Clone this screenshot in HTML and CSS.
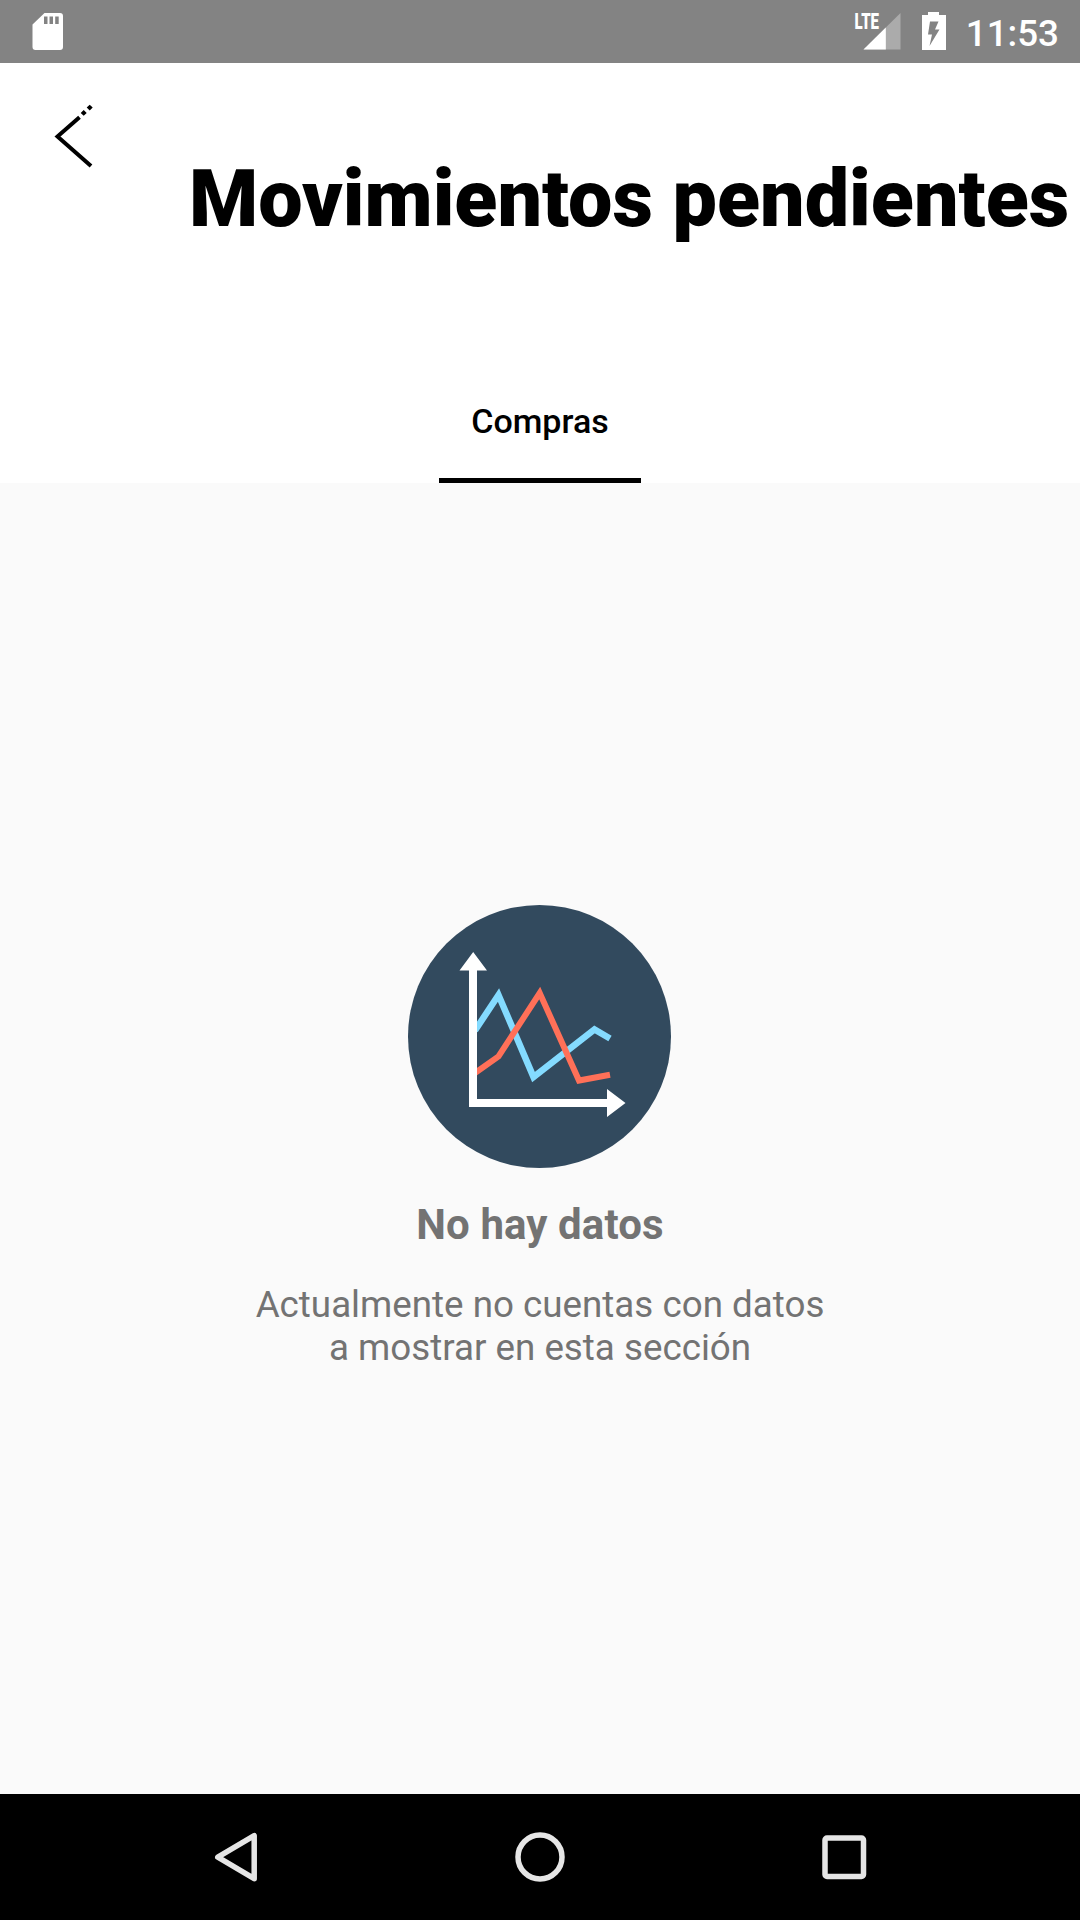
FILE: index.html
```html
<!DOCTYPE html>
<html lang="es">
<head>
    <meta charset="UTF-8">
    <meta name="viewport" content="width=device-width, initial-scale=1.0">
    <title>Movimientos pendientes</title>
    <link rel="stylesheet" href="styles.css">
</head>
<body>
    <div class="status-bar">
        <svg class="sd-icon" width="32" height="40" viewBox="0 0 32 40">
            <path fill="#fff" fill-rule="evenodd" d="M12.5 1H28a3 3 0 0 1 3 3v31a3 3 0 0 1-3 3H3.500a3 3 0 0 1-3-3V12.500zM12 4.500v7.500h3.500V4.500zM17.500 4.500v7.500h3.500V4.500zM23.200 4.500v7.500h3.500V4.500z"/>
        </svg>
        <div class="status-right">
            <svg class="signal-icon" width="50" height="40" viewBox="0 0 50 40">
                <path fill="#ababab" d="M47.500 1v36.500H10.500z"/>
                <path fill="#fff" d="M32.800 15.500v22H10.500z"/>
                <text class="lte" x="1.500" y="17.300" textLength="24.500" lengthAdjust="spacingAndGlyphs">LTE</text>
            </svg>
            <svg class="battery-icon" width="26" height="40" viewBox="0 0 26 40">
                <path fill="#fff" d="M7 0h11v3h7v35H1V3h6z"/>
                <path fill="#838383" d="M9 9.500h8.500l-3.500 8h4.500L8.500 34l2.500-11.500H7z"/>
            </svg>
            <span class="time">11:53</span>
        </div>
    </div>

    <div class="header">
        <div class="title-row">
            <svg class="back-icon" width="40" height="66" viewBox="0 0 40 66">
                <path fill="none" stroke="#000" stroke-width="4" d="M26.500 14.200 4.500 33.500 38 63"/>
                <path d="M30.700 7l3 2.900-3 2.900-3-2.900zM36.700 1.700l3 2.900-3 2.900-3-2.900z"/>
            </svg>
            <h1>Movimientos pendientes</h1>
        </div>
        <div class="tabs">
            <div class="tab active">Compras</div>
        </div>
    </div>

    <div class="content">
        <svg class="chart-icon" width="264" height="264" viewBox="0 0 264 264">
            <circle cx="131.500" cy="131.500" r="131.500" fill="#324a5e"/>
            <path fill="none" stroke="#84dbff" stroke-width="6.500" d="M67 125.500 90.500 90 125.500 172 186.500 124.500 202 133.500"/>
            <path fill="none" stroke="#ff7058" stroke-width="6" d="M67 168 90.500 151.500 131.700 88 171 175.500 202 169.700"/>
            <path fill="#fff" d="M61 65.500H51.500L65.200 47 79 65.500H69V194h130v-10l18.500 14L199 212v-10H61z"/>
        </svg>
        <h2>No hay datos</h2>
        <p>Actualmente no cuentas con datos<br>a mostrar en esta sección</p>
    </div>

    <div class="nav-bar">
        <svg width="50" height="50" viewBox="0 0 50 50">
            <path class="nav-shape" d="M44.200 3.700v43L7.800 25.200z"/>
        </svg>
        <svg width="50" height="50" viewBox="0 0 50 50">
            <circle class="nav-shape" cx="25" cy="25" r="22"/>
        </svg>
        <svg width="50" height="50" viewBox="0 0 50 50">
            <rect class="nav-shape" x="6" y="6" width="38.500" height="38.500" rx="2"/>
        </svg>
    </div>
</body>
</html>
```

FILE: styles.css
```css
* {
    box-sizing: border-box;
    font-family: Roboto, 'Noto Sans', sans-serif;
}

body {
    display: flex;
    flex-direction: column;
    width: 1080px;
    height: 1920px;
    margin: 0;
    background: #fafafa;
    overflow: hidden;
}

h1, h2, p {
    margin: 0;
}

svg {
    display: block;
    flex-shrink: 0;
}

.status-bar {
    display: flex;
    justify-content: space-between;
    height: 63px;
    padding: 12px 21px 0 32px;
    background: #838383;
}

.status-right {
    display: flex;
}

.signal-icon {
    margin-right: 18px;
    overflow: visible;
}

.lte {
    font-size: 22px;
    font-weight: 900;
    fill: #fff;
}

.battery-icon {
    margin-right: 19px;
}

.time {
    color: #fff;
    font-size: 36.75px;
    font-weight: 500;
    line-height: 43px;
}

.header {
    display: flex;
    flex-direction: column;
    justify-content: space-between;
    height: 420px;
    background: #fff;
}

.title-row {
    display: flex;
    align-items: flex-start;
    padding: 40px 0 0 53px;
}

h1 {
    margin: 49px 0 0 96px;
    font-size: 79px;
    font-weight: 900;
    line-height: 94px;
    color: #000;
    white-space: nowrap;
}

.tabs {
    display: flex;
    justify-content: center;
}

.tab {
    width: 202px;
    height: 84px;
    font-size: 34px;
    font-weight: 500;
    line-height: 44px;
    text-align: center;
    color: #000;
}

.tab.active {
    border-bottom: 5px solid #000;
}

.content {
    display: flex;
    flex: 1;
    flex-direction: column;
    align-items: center;
    padding-top: 422px;
    color: #737373;
    text-align: center;
}

h2 {
    margin-top: 31px;
    font-size: 42px;
    font-weight: 700;
    letter-spacing: 0.1px;
    line-height: 50px;
}

p {
    margin-top: 33px;
    font-size: 36.75px;
    line-height: 43px;
}

.nav-bar {
    display: flex;
    justify-content: space-between;
    height: 126px;
    padding: 38px 211px 0 210px;
    background: #000;
}

.nav-shape {
    fill: none;
    stroke: #e6e6e6;
    stroke-width: 5.5;
    stroke-linejoin: round;
}
```
